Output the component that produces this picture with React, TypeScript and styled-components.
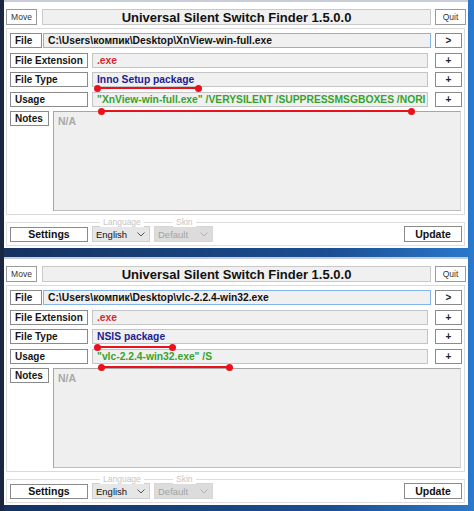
import styled, { createGlobalStyle } from "styled-components";

const GlobalStyle = createGlobalStyle`
  html, body { margin: 0; padding: 0; }
  body {
    width: 474px;
    height: 511px;
    overflow: hidden;
    background: linear-gradient(90deg, #1b2740 0, #1b2740 4px, #15325f 4px, #1b4f93 70%, #2a79cc 100%);
    font-family: "Liberation Sans", Arial, sans-serif;
  }
`;

const Screen = styled.div`
  display: flex;
  flex-direction: column;
  gap: 9px;
  padding-left: 4px;
  width: 464px;
`;

const Window = styled.div`
  position: relative;
  box-sizing: border-box;
  height: 248px;
  background: #fff;
  border-top: 2px solid #c7ced8;
  padding: 7px 2px 0 2px;
  display: flex;
  flex-direction: column;
`;

const Header = styled.div`
  display: flex;
  gap: 4px;
  height: 16px;
`;

const SmallButton = styled.div<{ $gapRight?: boolean }>`
  box-sizing: border-box;
  width: 31px;
  height: 16px;
  margin-right: ${(p) => (p.$gapRight ? "1px" : "0")};
  border: 1px solid #9a9a9a;
  background: #fff;
  font-size: 8.5px;
  color: #333;
  display: flex;
  align-items: center;
  justify-content: center;
`;

const Title = styled.div`
  flex: 1;
  box-sizing: border-box;
  border: 1px solid #c9c9c9;
  background: #f0f0f0;
  font-size: 13px;
  font-weight: bold;
  color: #111;
  display: flex;
  align-items: center;
  justify-content: center;
`;

const Group = styled.div`
  box-sizing: border-box;
  margin: 3px 1px 0 0;
  height: 187px;
  border: 1px solid #dadada;
  padding: 4px 2px 3px 3px;
  display: grid;
  grid-template-columns: minmax(0, 1fr);
  grid-template-rows: repeat(4, 15px) 100px;
  row-gap: 4.5px;
`;

const Row = styled.div<{ $gap: number }>`
  display: flex;
  min-width: 0;
  gap: ${(p) => p.$gap}px;
  align-items: stretch;
`;

const Label = styled.div<{ $w: number }>`
  box-sizing: border-box;
  width: ${(p) => p.$w}px;
  height: 15px;
  flex: none;
  border: 1px solid #8a8a8a;
  background: #fff;
  font-size: 10px;
  font-weight: bold;
  color: #151515;
  padding-left: 4px;
  display: flex;
  align-items: center;
  white-space: nowrap;
`;

const Field = styled.div<{ $color: string; $focus?: boolean }>`
  flex: 1;
  min-width: 0;
  box-sizing: border-box;
  height: 15px;
  border: 1px solid ${(p) => (p.$focus ? "#84b5e6" : "#c4c4c4")};
  background: #f0f0f0;
  font-size: 10.3px;
  font-weight: bold;
  color: ${(p) => p.$color};
  padding-left: 4px;
  display: flex;
  align-items: center;
  white-space: nowrap;
  overflow: hidden;
`;

const SideButton = styled.div`
  box-sizing: border-box;
  width: 27px;
  height: 15px;
  flex: none;
  margin-left: 3px;
  border: 1px solid #8a8a8a;
  background: #fff;
  font-size: 10px;
  font-weight: bold;
  color: #222;
  display: flex;
  align-items: center;
  justify-content: center;
`;

const NotesRow = styled.div`
  display: flex;
  min-width: 0;
  gap: 4px;
  align-items: flex-start;
  padding-right: 1px;
`;

const NotesArea = styled.div`
  flex: 1;
  height: 100px;
  box-sizing: border-box;
  border: 1px solid #a6a6a6;
  border-right-color: #d4d4d4;
  border-bottom-color: #bdbdbd;
  background: #efefef;
  padding: 3px 0 0 4px;
  font-size: 10.5px;
  font-weight: bold;
  color: #a8a8a8;
`;

const BottomGroup = styled.div`
  position: relative;
  box-sizing: border-box;
  margin: 7px 1px 0 0;
  height: 24px;
  border: 1px solid #dedede;
  padding: 0 2px 0 3px;
  display: flex;
  align-items: center;
  gap: 4px;
`;

const Legend = styled.span<{ $x: number }>`
  position: absolute;
  top: -6px;
  left: ${(p) => p.$x}px;
  background: #fff;
  padding: 0 3px;
  font-size: 8.5px;
  line-height: 10px;
  color: #c6c6c6;
`;

const WideButton = styled.div<{ $h: number; $w: number }>`
  box-sizing: border-box;
  width: ${(p) => p.$w}px;
  height: ${(p) => p.$h}px;
  border: 1px solid #8a8a8a;
  background: #fff;
  font-size: 10.5px;
  font-weight: bold;
  color: #111;
  display: flex;
  align-items: center;
  justify-content: center;
`;

const Select = styled.div<{ $disabled?: boolean }>`
  box-sizing: border-box;
  width: ${(p) => (p.$disabled ? 59 : 58)}px;
  height: 16px;
  border: 1px solid ${(p) => (p.$disabled ? "#d6d6d6" : "#cfcfcf")};
  background: ${(p) => (p.$disabled ? "#dcdcdc" : "#e6e6e6")};
  font-size: 9.5px;
  color: ${(p) => (p.$disabled ? "#a3a3a3" : "#111")};
  padding: 0 4px 0 3px;
  display: flex;
  align-items: center;
  justify-content: space-between;
`;

const Spacer = styled.div`
  flex: 1;
`;

const Marker = styled.div<{ $x: number; $y: number; $w: number }>`
  position: absolute;
  left: ${(p) => p.$x}px;
  top: ${(p) => p.$y}px;
  width: ${(p) => p.$w}px;
  height: 2px;
  background: #e8121c;
  &::before,
  &::after {
    content: "";
    position: absolute;
    top: -2.5px;
    width: 7px;
    height: 7px;
    border-radius: 50%;
    background: #e8121c;
  }
  &::before { left: -3px; }
  &::after { right: -3px; }
`;

const Chevron = ({ color }: { color: string }) => (
  <svg width="8" height="5" viewBox="0 0 8 5">
    <polyline points="0.5,0.5 4,4 7.5,0.5" fill="none" stroke={color} strokeWidth="1" />
  </svg>
);

type Data = {
  path: string;
  type: string;
  usage: string;
  markers: { x: number; y: number; w: number }[];
};

const windows: Data[] = [
  {
    path: "C:\\Users\\компик\\Desktop\\XnView-win-full.exe",
    type: "Inno Setup package",
    usage: "\"XnView-win-full.exe\" /VERYSILENT /SUPPRESSMSGBOXES /NORI",
    markers: [
      { x: 93, y: 85, w: 102 },
      { x: 97, y: 108, w: 311 },
    ],
  },
  {
    path: "C:\\Users\\компик\\Desktop\\vlc-2.2.4-win32.exe",
    type: "NSIS package",
    usage: "\"vlc-2.2.4-win32.exe\" /S",
    markers: [
      { x: 93, y: 87, w: 76 },
      { x: 97, y: 107, w: 129 },
    ],
  },
];

function FinderWindow({ data }: { data: Data }) {
  return (
    <Window>
      <Header>
        <SmallButton $gapRight>Move</SmallButton>
        <Title>Universal Silent Switch Finder 1.5.0.0</Title>
        <SmallButton>Quit</SmallButton>
      </Header>
      <Group>
        <Row $gap={1}>
          <Label $w={32}>File</Label>
          <Field $color="#111" $focus>{data.path}</Field>
          <SideButton>&gt;</SideButton>
        </Row>
        <Row $gap={4}>
          <Label $w={78}>File Extension</Label>
          <Field $color="#d8262e">.exe</Field>
          <SideButton>+</SideButton>
        </Row>
        <Row $gap={4}>
          <Label $w={78}>File Type</Label>
          <Field $color="#1d2190">{data.type}</Field>
          <SideButton>+</SideButton>
        </Row>
        <Row $gap={4}>
          <Label $w={78}>Usage</Label>
          <Field $color="#35a42e">{data.usage}</Field>
          <SideButton>+</SideButton>
        </Row>
        <NotesRow>
          <Label $w={39}>Notes</Label>
          <NotesArea>N/A</NotesArea>
        </NotesRow>
      </Group>
      <BottomGroup>
        <Legend $x={93}>Language</Legend>
        <Legend $x={166}>Skin</Legend>
        <WideButton $h={15} $w={78}>Settings</WideButton>
        <Select>
          English
          <Chevron color="#555" />
        </Select>
        <Select $disabled>
          Default
          <Chevron color="#b0b0b0" />
        </Select>
        <Spacer />
        <WideButton $h={16} $w={58}>Update</WideButton>
      </BottomGroup>
      {data.markers.map((m, i) => (
        <Marker key={i} $x={m.x} $y={m.y} $w={m.w} />
      ))}
    </Window>
  );
}

export default function App() {
  return (
    <>
      <GlobalStyle />
      <Screen>
        {windows.map((w, i) => (
          <FinderWindow key={i} data={w} />
        ))}
      </Screen>
    </>
  );
}
